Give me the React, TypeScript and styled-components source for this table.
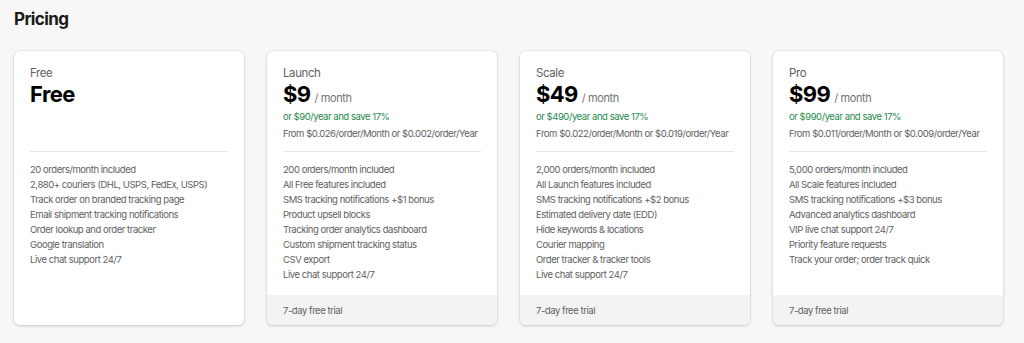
import React from "react";
import styled, { createGlobalStyle } from "styled-components";

interface Plan {
  name: string;
  price: string;
  period?: string;
  yearly?: string;
  perOrder?: string;
  features: string[];
  trial?: string;
}

const plans: Plan[] = [
  {
    name: "Free",
    price: "Free",
    features: [
      "20 orders/month included",
      "2,880+ couriers (DHL, USPS, FedEx, USPS)",
      "Track order on branded tracking page",
      "Email shipment tracking notifications",
      "Order lookup and order tracker",
      "Google translation",
      "Live chat support 24/7",
    ],
  },
  {
    name: "Launch",
    price: "$9",
    period: "/ month",
    yearly: "or $90/year and save 17%",
    perOrder: "From $0.026/order/Month or $0.002/order/Year",
    features: [
      "200 orders/month included",
      "All Free features included",
      "SMS tracking notifications +$1 bonus",
      "Product upsell blocks",
      "Tracking order analytics dashboard",
      "Custom shipment tracking status",
      "CSV export",
      "Live chat support 24/7",
    ],
    trial: "7-day free trial",
  },
  {
    name: "Scale",
    price: "$49",
    period: "/ month",
    yearly: "or $490/year and save 17%",
    perOrder: "From $0.022/order/Month or $0.019/order/Year",
    features: [
      "2,000 orders/month included",
      "All Launch features included",
      "SMS tracking notifications +$2 bonus",
      "Estimated delivery date (EDD)",
      "Hide keywords & locations",
      "Courier mapping",
      "Order tracker & tracker tools",
      "Live chat support 24/7",
    ],
    trial: "7-day free trial",
  },
  {
    name: "Pro",
    price: "$99",
    period: "/ month",
    yearly: "or $990/year and save 17%",
    perOrder: "From $0.011/order/Month or $0.009/order/Year",
    features: [
      "5,000 orders/month included",
      "All Scale features included",
      "SMS tracking notifications +$3 bonus",
      "Advanced analytics dashboard",
      "VIP live chat support 24/7",
      "Priority feature requests",
      "Track your order; order track quick",
    ],
    trial: "7-day free trial",
  },
];

const GlobalStyle = createGlobalStyle`
  html, body {
    margin: 0;
    padding: 0;
    background: #f7f7f7;
  }
  body {
    font-family: Inter, "Liberation Sans", sans-serif;
    color: #303030;
  }
`;

const Page = styled.div`
  padding: 7px 14px 18px 14px;
`;

const Title = styled.h1`
  margin: 0 0 20px 0;
  font-size: 17px;
  line-height: 24px;
  font-weight: 650;
  letter-spacing: -0.6px;
  color: #1a1a1a;
`;

const Grid = styled.div`
  display: grid;
  grid-template-columns: repeat(4, 230px);
  column-gap: 23px;
`;

const Card = styled.div`
  background: #fff;
  border-radius: 6px;
  box-shadow: 0 1px 3px rgba(0, 0, 0, 0.18), 0 0 0 1px rgba(0, 0, 0, 0.03);
  display: flex;
  flex-direction: column;
  overflow: hidden;
  height: 274px;
`;

const Body = styled.div`
  padding: 15px 16px 0 16px;
  flex: 1;
`;

const Header = styled.div`
  height: 85px;
  border-bottom: 1px solid #e6e6e6;
`;

const PlanName = styled.div`
  font-size: 11.5px;
  line-height: 14px;
  letter-spacing: -0.4px;
  color: #616161;
`;

const PriceRow = styled.div`
  display: flex;
  align-items: baseline;
  gap: 4px;
  margin-top: 1px;
  height: 27px;
`;

const Price = styled.span`
  font-size: 22px;
  line-height: 27px;
  font-weight: 700;
  letter-spacing: -0.6px;
  color: #000;
`;

const Period = styled.span`
  font-size: 11px;
  letter-spacing: -0.4px;
  color: #737373;
`;

const Yearly = styled.div`
  margin-top: 2px;
  font-size: 9.5px;
  line-height: 14px;
  letter-spacing: -0.45px;
  color: #1f8a4c;
`;

const PerOrder = styled.div`
  margin-top: 3px;
  font-size: 9.5px;
  line-height: 14px;
  letter-spacing: -0.45px;
  color: #616161;
`;

const Features = styled.ul`
  list-style: none;
  margin: 10px 0 0 0;
  padding: 0;
`;

const Feature = styled.li`
  font-size: 9.5px;
  line-height: 15px;
  letter-spacing: -0.45px;
  color: #616161;
`;

const Footer = styled.div`
  background: #f3f3f3;
  height: 30px;
  padding: 0 16px;
  display: flex;
  align-items: center;
  font-size: 9.5px;
  letter-spacing: -0.45px;
  color: #616161;
`;

const PlanCard: React.FC<{ plan: Plan }> = ({ plan }) => (
  <Card>
    <Body>
      <Header>
        <PlanName>{plan.name}</PlanName>
        <PriceRow>
          <Price>{plan.price}</Price>
          {plan.period && <Period>{plan.period}</Period>}
        </PriceRow>
        {plan.yearly && <Yearly>{plan.yearly}</Yearly>}
        {plan.perOrder && <PerOrder>{plan.perOrder}</PerOrder>}
      </Header>
      <Features>
        {plan.features.map((f) => (
          <Feature key={f}>{f}</Feature>
        ))}
      </Features>
    </Body>
    {plan.trial && <Footer>{plan.trial}</Footer>}
  </Card>
);

const App: React.FC = () => (
  <>
    <GlobalStyle />
    <Page>
      <Title>Pricing</Title>
      <Grid>
        {plans.map((p) => (
          <PlanCard key={p.name} plan={p} />
        ))}
      </Grid>
    </Page>
  </>
);

export default App;
